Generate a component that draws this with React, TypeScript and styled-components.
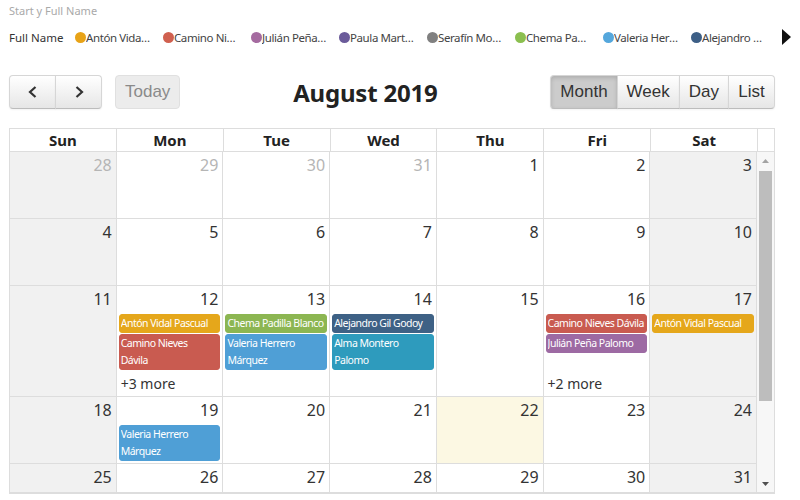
import React from 'react'
import styled, { createGlobalStyle, css } from 'styled-components'

const GlobalStyle = createGlobalStyle`
  html, body {
    margin: 0;
    padding: 0;
    background: #fff;
    font-family: 'Noto Sans', 'Open Sans', sans-serif;
    color: #333;
  }
`

type Ev = { lines: string[]; color: string }
type Day = { n: number; other?: boolean; today?: boolean; events?: Ev[]; more?: number }

const C = {
  orange: '#e5a71b',
  red: '#c95b50',
  green: '#8cb652',
  blue: '#4f9fd6',
  navy: '#3e6185',
  teal: '#2e9bbd',
  purple: '#9d6aa3'
}

const legend = [
  { name: 'Antón Vidal Pascual', color: '#e8a317' },
  { name: 'Camino Nieves Dávila', color: '#d0604f' },
  { name: 'Julián Peña Palomo', color: '#a56ba0' },
  { name: 'Paula Martínez', color: '#6b5b9a' },
  { name: 'Serafín Moreno', color: '#808080' },
  { name: 'Chema Padilla Blanco', color: '#8bbf4f' },
  { name: 'Valeria Herrero Márquez', color: '#55a7dc' },
  { name: 'Alejandro Gil Godoy', color: '#3d5f86' }
]

const weeks: { slots: number; hasMore?: boolean; days: Day[] }[] = [
  {
    slots: 0,
    days: [{ n: 28, other: true }, { n: 29, other: true }, { n: 30, other: true }, { n: 31, other: true }, { n: 1 }, { n: 2 }, { n: 3 }]
  },
  { slots: 0, days: [4, 5, 6, 7, 8, 9, 10].map((n) => ({ n })) },
  {
    slots: 2,
    hasMore: true,
    days: [
      { n: 11 },
      {
        n: 12,
        events: [
          { lines: ['Antón Vidal Pascual'], color: C.orange },
          { lines: ['Camino Nieves', 'Dávila'], color: C.red }
        ],
        more: 3
      },
      {
        n: 13,
        events: [
          { lines: ['Chema Padilla Blanco'], color: C.green },
          { lines: ['Valeria Herrero', 'Márquez'], color: C.blue }
        ]
      },
      {
        n: 14,
        events: [
          { lines: ['Alejandro Gil Godoy'], color: C.navy },
          { lines: ['Alma Montero', 'Palomo'], color: C.teal }
        ]
      },
      { n: 15 },
      {
        n: 16,
        events: [
          { lines: ['Camino Nieves Dávila'], color: C.red },
          { lines: ['Julián Peña Palomo'], color: C.purple }
        ],
        more: 2
      },
      { n: 17, events: [{ lines: ['Antón Vidal Pascual'], color: C.orange }] }
    ]
  },
  {
    slots: 1,
    days: [
      { n: 18 },
      { n: 19, events: [{ lines: ['Valeria Herrero', 'Márquez'], color: C.blue }] },
      { n: 20 },
      { n: 21 },
      { n: 22, today: true },
      { n: 23 },
      { n: 24 }
    ]
  },
  { slots: 0, days: [25, 26, 27, 28, 29, 30, 31].map((n) => ({ n })) }
]

const dayNames = ['Sun', 'Mon', 'Tue', 'Wed', 'Thu', 'Fri', 'Sat']

// row template per week: number row, one row per event slot, the "+n more" row, then filler
const rowsFor = (slots: number, more: boolean) => {
  if (slots === 0) return '28px 1fr'
  if (slots === 1) return '28px 38px 1fr'
  return `28px 20px 38px ${more ? '24px ' : ''}1fr`
}

export default function App() {
  return (
    <>
      <GlobalStyle />
      <Page>
        <Caption>Start y Full Name</Caption>
        <Legend>
          <LegendTitle>Full Name</LegendTitle>
          {legend.map((l) => (
            <LegendItem key={l.name}>
              <Dot $color={l.color} />
              <LegendText>{l.name}</LegendText>
            </LegendItem>
          ))}
          <LegendArrow>
            <svg width="10" height="16" viewBox="0 0 10 16">
              <path d="M1 0 L10 8 L1 16 Z" fill="#111" />
            </svg>
          </LegendArrow>
        </Legend>

        <Toolbar>
          <ToolGroup>
            <ButtonGroup>
              <Button $first>
                <svg width="14" height="14" viewBox="0 0 14 14">
                  <path d="M9.5 2 L4 7 L9.5 12" fill="none" stroke="#333" strokeWidth="2.2" />
                </svg>
              </Button>
              <Button $last>
                <svg width="14" height="14" viewBox="0 0 14 14">
                  <path d="M4.5 2 L10 7 L4.5 12" fill="none" stroke="#333" strokeWidth="2.2" />
                </svg>
              </Button>
            </ButtonGroup>
            <Button $first $last $disabled>
              Today
            </Button>
          </ToolGroup>
          <Title>August 2019</Title>
          <ButtonGroup>
            <Button $first $active>
              Month
            </Button>
            <Button>Week</Button>
            <Button>Day</Button>
            <Button $last>List</Button>
          </ButtonGroup>
        </Toolbar>

        <Calendar>
          <HeadRow>
            {dayNames.map((d) => (
              <HeadCell key={d}>{d}</HeadCell>
            ))}
            <HeadGutter />
          </HeadRow>
          <BodyWrap>
            <Weeks>
              {weeks.map((w, wi) => (
                <Week key={wi} $rows={rowsFor(w.slots, !!w.hasMore)}>
                  {w.days.map((d, di) => (
                    <React.Fragment key={di}>
                      <DayBg $col={di + 1} $weekend={di === 0 || di === 6} $today={!!d.today} />
                      <DayNum $col={di + 1} $other={!!d.other}>
                        {d.n}
                      </DayNum>
                      {d.events?.map((e, ei) => (
                        <Event key={ei} $col={di + 1} $row={ei + 2} $color={e.color}>
                          {e.lines.map((line, li) => (
                            <EventLine key={li}>{line}</EventLine>
                          ))}
                        </Event>
                      ))}
                      {d.more && (
                        <More $col={di + 1} $row={w.slots + 2}>
                          +{d.more} more
                        </More>
                      )}
                    </React.Fragment>
                  ))}
                </Week>
              ))}
            </Weeks>
            <Scrollbar>
              <ScrollArrow>
                <svg width="7" height="4" viewBox="0 0 7 4">
                  <path d="M0 4 L3.5 0 L7 4 Z" fill="#a3a3a3" />
                </svg>
              </ScrollArrow>
              <Track>
                <Thumb />
              </Track>
              <ScrollArrow>
                <svg width="7" height="4" viewBox="0 0 7 4">
                  <path d="M0 0 L3.5 4 L7 0 Z" fill="#505050" />
                </svg>
              </ScrollArrow>
            </Scrollbar>
          </BodyWrap>
        </Calendar>
      </Page>
    </>
  )
}

const Page = styled.div`
  width: 800px;
  height: 500px;
  overflow: hidden;
  padding: 4px 0 0 9px;
  box-sizing: border-box;
`

const Caption = styled.div`
  font-size: 11px;
  line-height: 14px;
  color: #a9a9a9;
`

const Legend = styled.div`
  display: flex;
  align-items: center;
  height: 20px;
  margin-top: 9px;
  font-size: 11.5px;
  letter-spacing: -0.4px;
`

const LegendTitle = styled.div`
  width: 66px;
  flex: none;
  color: #333;
  letter-spacing: 0;
`

const LegendItem = styled.div`
  display: flex;
  align-items: center;
  width: 88px;
  flex: none;
`

const Dot = styled.span<{ $color: string }>`
  width: 11px;
  height: 11px;
  border-radius: 50%;
  background: ${(p) => p.$color};
  flex: none;
`

const LegendText = styled.span`
  width: 66px;
  overflow: hidden;
  text-overflow: ellipsis;
  white-space: nowrap;
  color: #444;
`

const LegendArrow = styled.div`
  display: flex;
  margin-left: 2px;
`

const Toolbar = styled.div`
  display: flex;
  align-items: center;
  width: 766px;
  height: 34px;
  margin-top: 28px;
`

const ToolGroup = styled.div`
  display: flex;
  gap: 13px;
`

const ButtonGroup = styled.div`
  display: flex;
`

const Button = styled.div<{ $first?: boolean; $last?: boolean; $active?: boolean; $disabled?: boolean }>`
  display: flex;
  align-items: center;
  justify-content: center;
  height: 34px;
  box-sizing: border-box;
  padding: 0 9px;
  min-width: 47px;
  font-family: 'Liberation Sans', Arial, sans-serif;
  font-size: 17px;
  color: #333;
  border: 1px solid #d6d6d6;
  border-bottom-color: #bcbcbc;
  margin-left: -1px;
  background: linear-gradient(#ffffff, #e6e6e6);
  box-shadow: inset 0 1px 0 rgba(255, 255, 255, 0.2), 0 1px 2px rgba(0, 0, 0, 0.05);
  ${(p) => p.$first && css`border-top-left-radius: 4px; border-bottom-left-radius: 4px; margin-left: 0;`}
  ${(p) => p.$last && css`border-top-right-radius: 4px; border-bottom-right-radius: 4px;`}
  ${(p) =>
    p.$active &&
    css`
      background: #cccccc;
      box-shadow: inset 0 2px 4px rgba(0, 0, 0, 0.15), 0 1px 2px rgba(0, 0, 0, 0.05);
    `}
  ${(p) =>
    p.$disabled &&
    css`
      background: #ececec;
      color: #8a8a8a;
      border-color: #e0e0e0;
      box-shadow: none;
    `}
`

const Title = styled.h2`
  flex: 1;
  margin: 0;
  text-align: center;
  font-size: 24px;
  font-weight: 700;
  color: #222;
  letter-spacing: -0.2px;
`

const Calendar = styled.div`
  width: 766px;
  margin-top: 19px;
  border: 1px solid #ddd;
  border-right: none;
  box-sizing: border-box;
`

const HeadRow = styled.div`
  display: grid;
  grid-template-columns: repeat(7, minmax(0, 1fr)) 17px;
  border-bottom: 1px solid #ddd;
`

const HeadCell = styled.div`
  height: 22px;
  line-height: 22px;
  text-align: center;
  font-size: 15px;
  font-weight: 700;
  color: #222;
  border-right: 1px solid #ddd;
`

const HeadGutter = styled.div`
  border-right: 1px solid #ddd;
`

const BodyWrap = styled.div`
  display: flex;
  height: 340px;
  overflow: hidden;
  border-bottom: 1px solid #ddd;
`

const Weeks = styled.div`
  flex: 1;
  min-width: 0;
`

const Week = styled.div<{ $rows: string }>`
  display: grid;
  grid-template-columns: repeat(7, minmax(0, 1fr));
  grid-template-rows: ${(p) => p.$rows};
  min-height: 66px;
  border-bottom: 1px solid #ddd;
`

const DayBg = styled.div<{ $col: number; $weekend: boolean; $today: boolean }>`
  grid-column: ${(p) => p.$col};
  grid-row: 1 / -1;
  border-right: 1px solid #ddd;
  background: ${(p) => (p.$today ? '#fcf8e3' : p.$weekend ? '#f1f1f1' : '#fff')};
`

const DayNum = styled.div<{ $col: number; $other: boolean }>`
  grid-column: ${(p) => p.$col};
  grid-row: 1;
  z-index: 1;
  text-align: right;
  padding: 2px 5px 0 0;
  font-size: 16px;
  line-height: 22px;
  color: ${(p) => (p.$other ? '#b5b5b5' : '#333')};
`

const Event = styled.div<{ $col: number; $row: number; $color: string }>`
  grid-column: ${(p) => p.$col};
  grid-row: ${(p) => p.$row};
  z-index: 1;
  align-self: start;
  margin: 0 3px 0 2px;
  padding: 0 1px;
  background: ${(p) => p.$color};
  border: 1px solid ${(p) => p.$color};
  border-radius: 3px;
  color: #fff;
  font-size: 10.5px;
  line-height: 17px;
  letter-spacing: -0.5px;
`

const EventLine = styled.div`
  white-space: nowrap;
  overflow: hidden;
`

const More = styled.div<{ $col: number; $row: number }>`
  grid-column: ${(p) => p.$col};
  grid-row: ${(p) => p.$row};
  z-index: 1;
  padding: 3px 0 0 4px;
  font-size: 14px;
  line-height: 18px;
  color: #333;
`

const Scrollbar = styled.div`
  width: 17px;
  flex: none;
  display: flex;
  flex-direction: column;
  background: #f7f7f7;
  border-right: 1px solid #ddd;
`

const ScrollArrow = styled.div`
  height: 17px;
  display: flex;
  align-items: center;
  justify-content: center;
`

const Track = styled.div`
  flex: 1;
  padding-top: 2px;
`

const Thumb = styled.div`
  width: 13px;
  height: 230px;
  margin: 0 auto;
  background: #bdbdbd;
`
